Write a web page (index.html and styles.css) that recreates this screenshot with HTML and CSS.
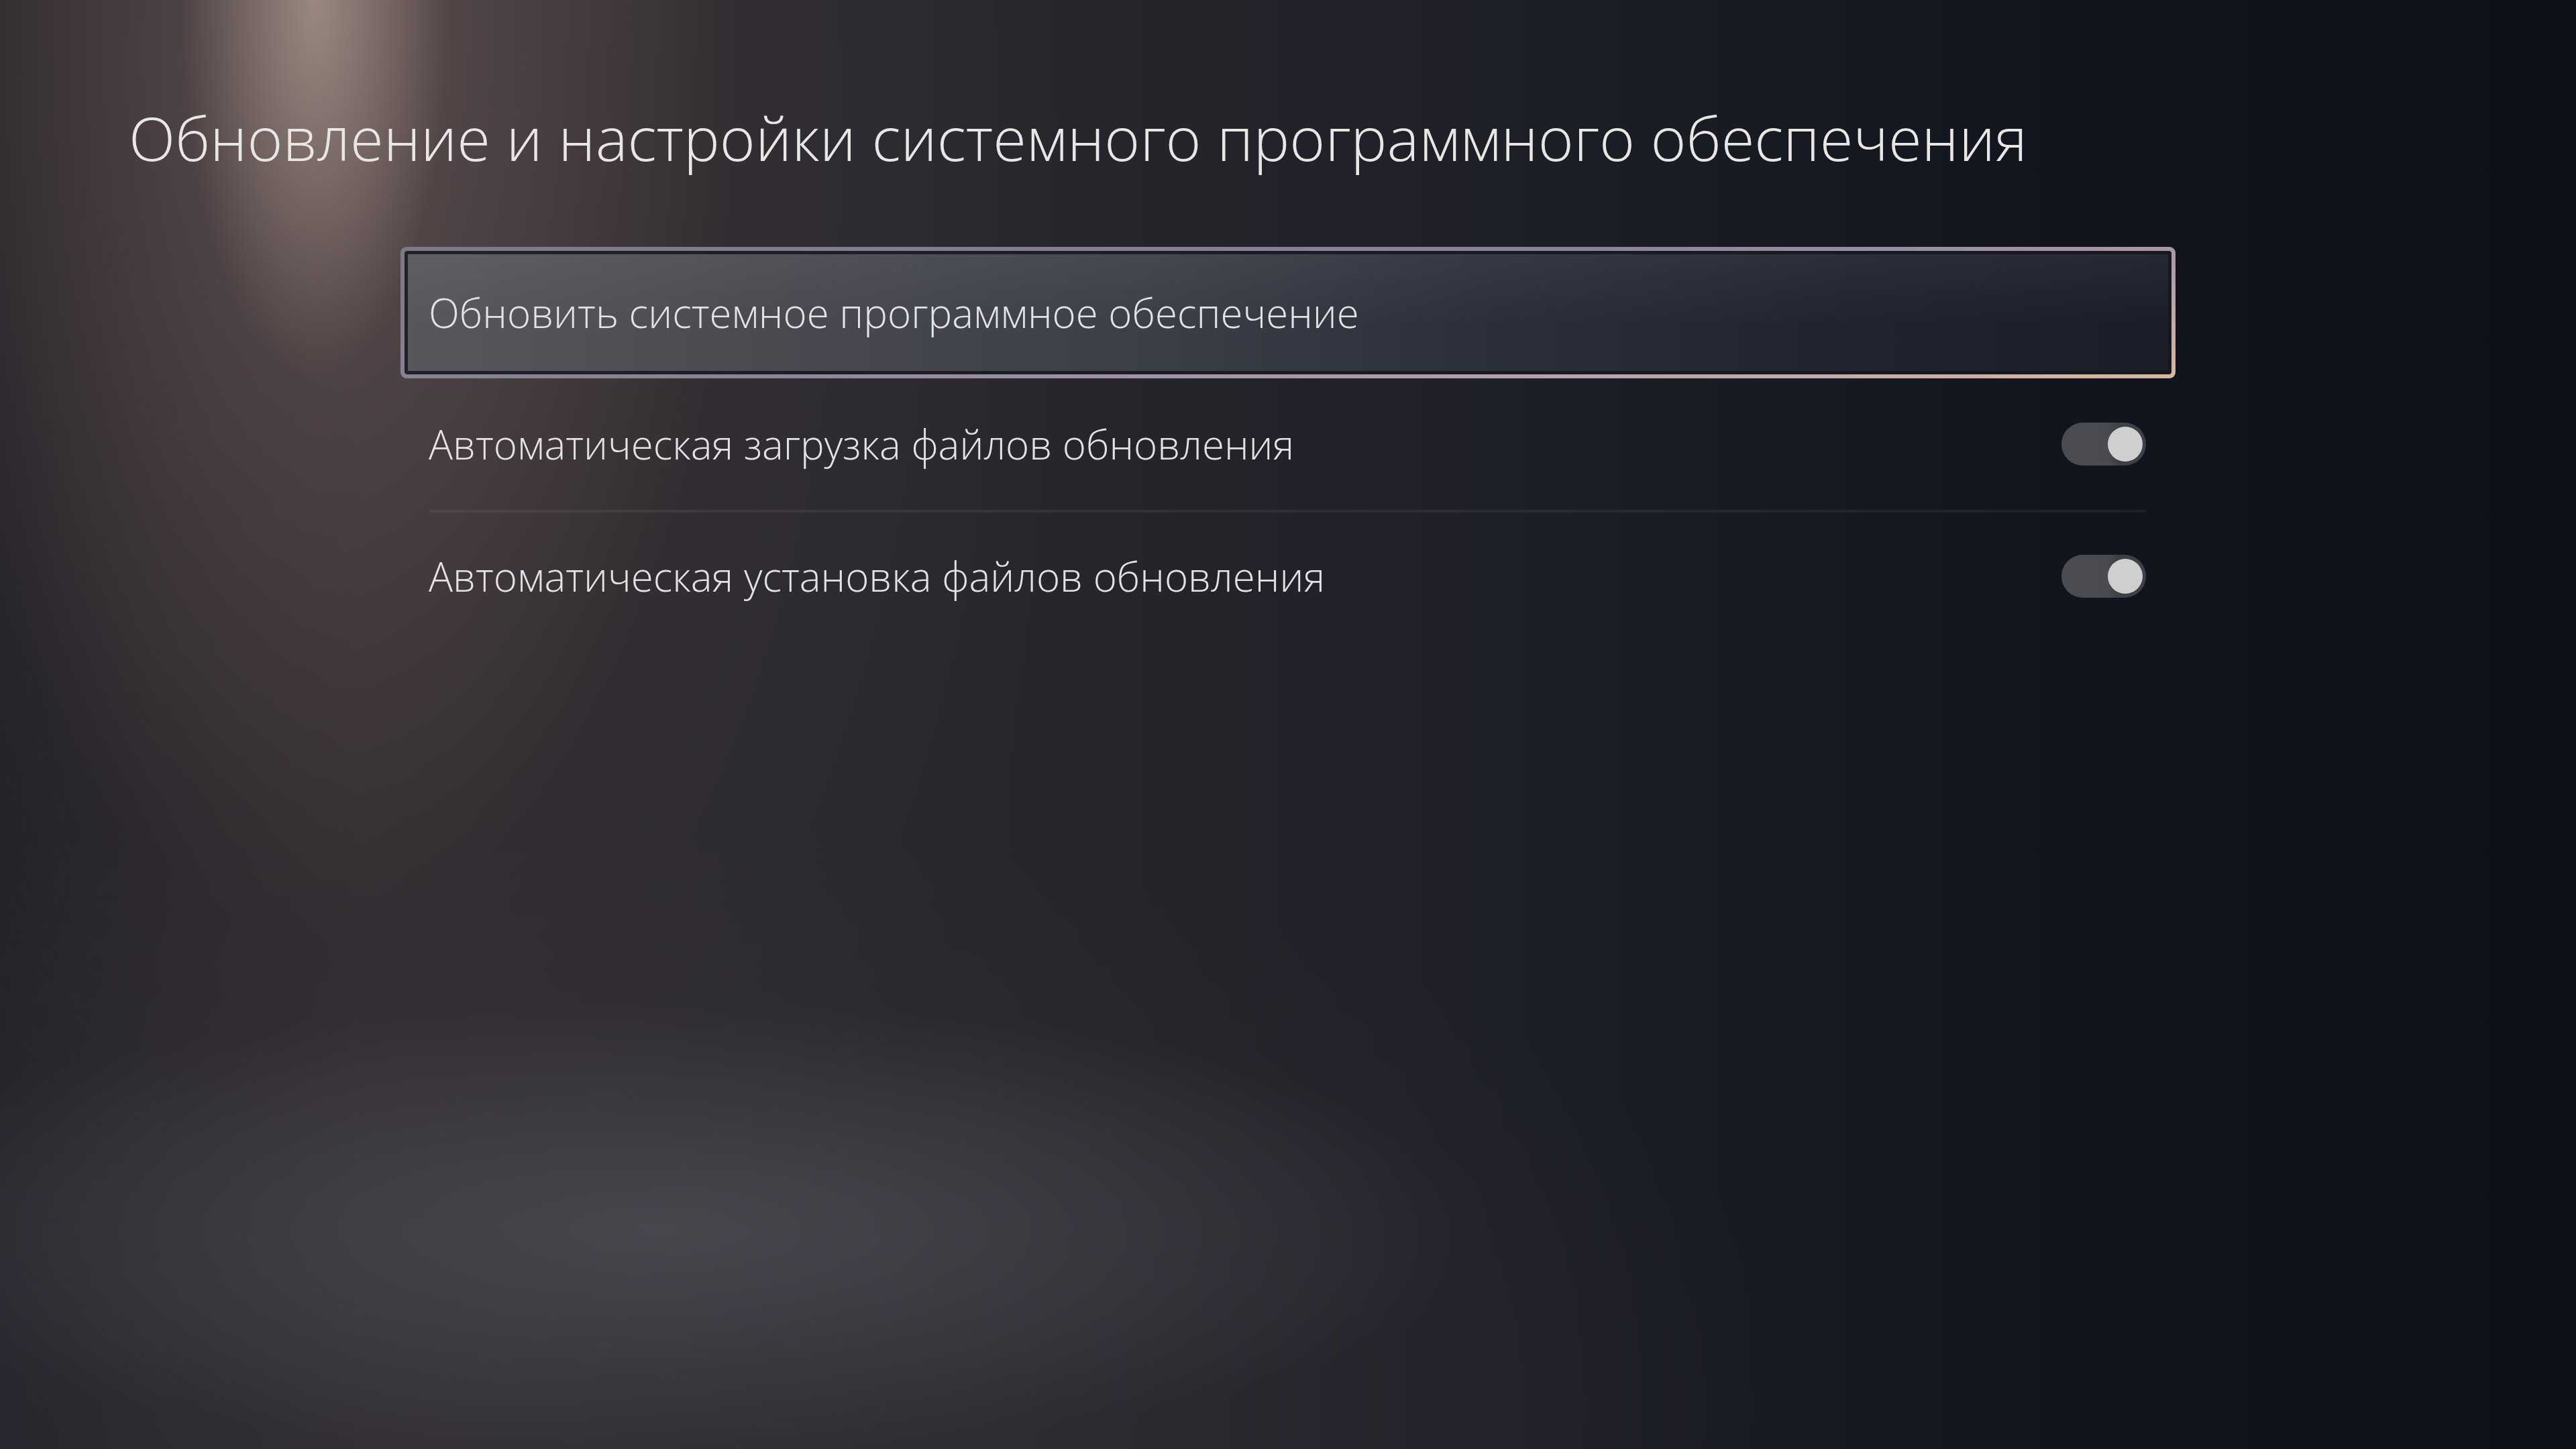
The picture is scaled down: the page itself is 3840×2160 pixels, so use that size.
FILE: index.html
```html
<!DOCTYPE html>
<html lang="ru">
<head>
    <meta charset="utf-8">
    <title>Обновление и настройки системного программного обеспечения</title>
    <link rel="stylesheet" href="styles.css">
</head>
<body>
    <div class="screen">
        <h1 class="page-title">Обновление и настройки системного программного обеспечения</h1>

        <ul class="settings-list">
            <li class="setting-row selected">
                <div class="row-body">
                    <span class="label">Обновить системное программное обеспечение</span>
                </div>
            </li>
            <li class="setting-row">
                <div class="row-body">
                    <span class="label">Автоматическая загрузка файлов обновления</span>
                    <span class="toggle on"><span class="knob"></span></span>
                </div>
            </li>
            <li class="divider"></li>
            <li class="setting-row last">
                <div class="row-body">
                    <span class="label">Автоматическая установка файлов обновления</span>
                    <span class="toggle on"><span class="knob"></span></span>
                </div>
            </li>
        </ul>
    </div>
</body>
</html>
```

FILE: styles.css
```css
html, body {
    margin: 0;
    padding: 0;
    background: #11141c;
}

.screen {
    width: 3840px;
    height: 2160px;
    box-sizing: border-box;
    padding: 160px 0 0 192px;
    font-family: "Open Sans", "Noto Sans", sans-serif;
    font-weight: 300;
    color: #e6e4e6;
    overflow: hidden;
    /* spotlight from the top left, a soft floor glow, dark navy to the right */
    background:
        radial-gradient(ellipse 200px 560px at 470px 0px, rgba(180, 160, 150, 0.7), rgba(180, 160, 150, 0) 100%),
        radial-gradient(ellipse 620px 1400px at 480px 0px, rgba(125, 105, 100, 0.5), rgba(125, 105, 100, 0) 100%),
        radial-gradient(ellipse 1100px 2100px at 520px 200px, rgba(75, 62, 64, 0.6), rgba(75, 62, 64, 0) 100%),
        radial-gradient(ellipse 1250px 340px at 980px 1830px, rgba(84, 86, 94, 0.65), rgba(84, 86, 94, 0) 100%),
        radial-gradient(ellipse 2000px 900px at 700px 2100px, rgba(60, 54, 62, 0.6), rgba(60, 54, 62, 0) 100%),
        linear-gradient(to right, #1c1c24 0%, #29272d 14%, #28272d 38%, #1d1f27 60%, #12151d 80%, #0e111a 100%);
}

.page-title {
    margin: 0;
    font-size: 90.5px;
    line-height: 90px;
    font-weight: 300;
    color: #e9e6e6;
}

.settings-list {
    list-style: none;
    margin: 118px 0 0 405px;
    padding: 0;
    width: 2646px;
}

.setting-row {
    height: 196px;
    padding: 6px;
    box-sizing: border-box;
    border-radius: 9px;
}

.setting-row.last {
    height: 190px;
}

.row-body {
    height: 100%;
    box-sizing: border-box;
    padding: 0 38px 0 36px;
    display: flex;
    align-items: center;
    justify-content: space-between;
    border-radius: 4px;
}

.label {
    font-size: 60px;
    line-height: 60px;
    color: #e4e2e6;
}

/* focused row: gradient frame, dark inner ring, lit glass fill */
.setting-row.selected {
    background: linear-gradient(172deg, #7b7887 0%, #8a8498 45%, #b39fb0 75%, #d8b89d 100%);
}

.setting-row.selected .row-body {
    background:
        linear-gradient(to bottom, rgba(255, 255, 255, 0.05), rgba(255, 255, 255, 0) 60%),
        linear-gradient(to right, #58575d 0%, #4a4a51 20%, #3b3f48 42%, #2b2f39 62%, #20242e 82%, #1b1e28 100%);
    box-shadow: inset 0 0 0 5px rgba(22, 22, 28, 0.85);
}

.divider {
    height: 4px;
    margin: 0 44px 0 43px;
    background: rgba(255, 255, 255, 0.06);
}

.toggle {
    width: 126px;
    height: 64px;
    box-sizing: border-box;
    border-radius: 32px;
    padding: 6px 5px;
    display: flex;
    align-items: center;
    justify-content: flex-start;
    background: linear-gradient(to right, #4b4c52 0%, #4a4b51 55%, #3f4046 66%, #3f4046 100%);
}

.toggle.on {
    justify-content: flex-end;
}

.knob {
    width: 52px;
    height: 52px;
    border-radius: 50%;
    background: #cfcfcf;
}
```
